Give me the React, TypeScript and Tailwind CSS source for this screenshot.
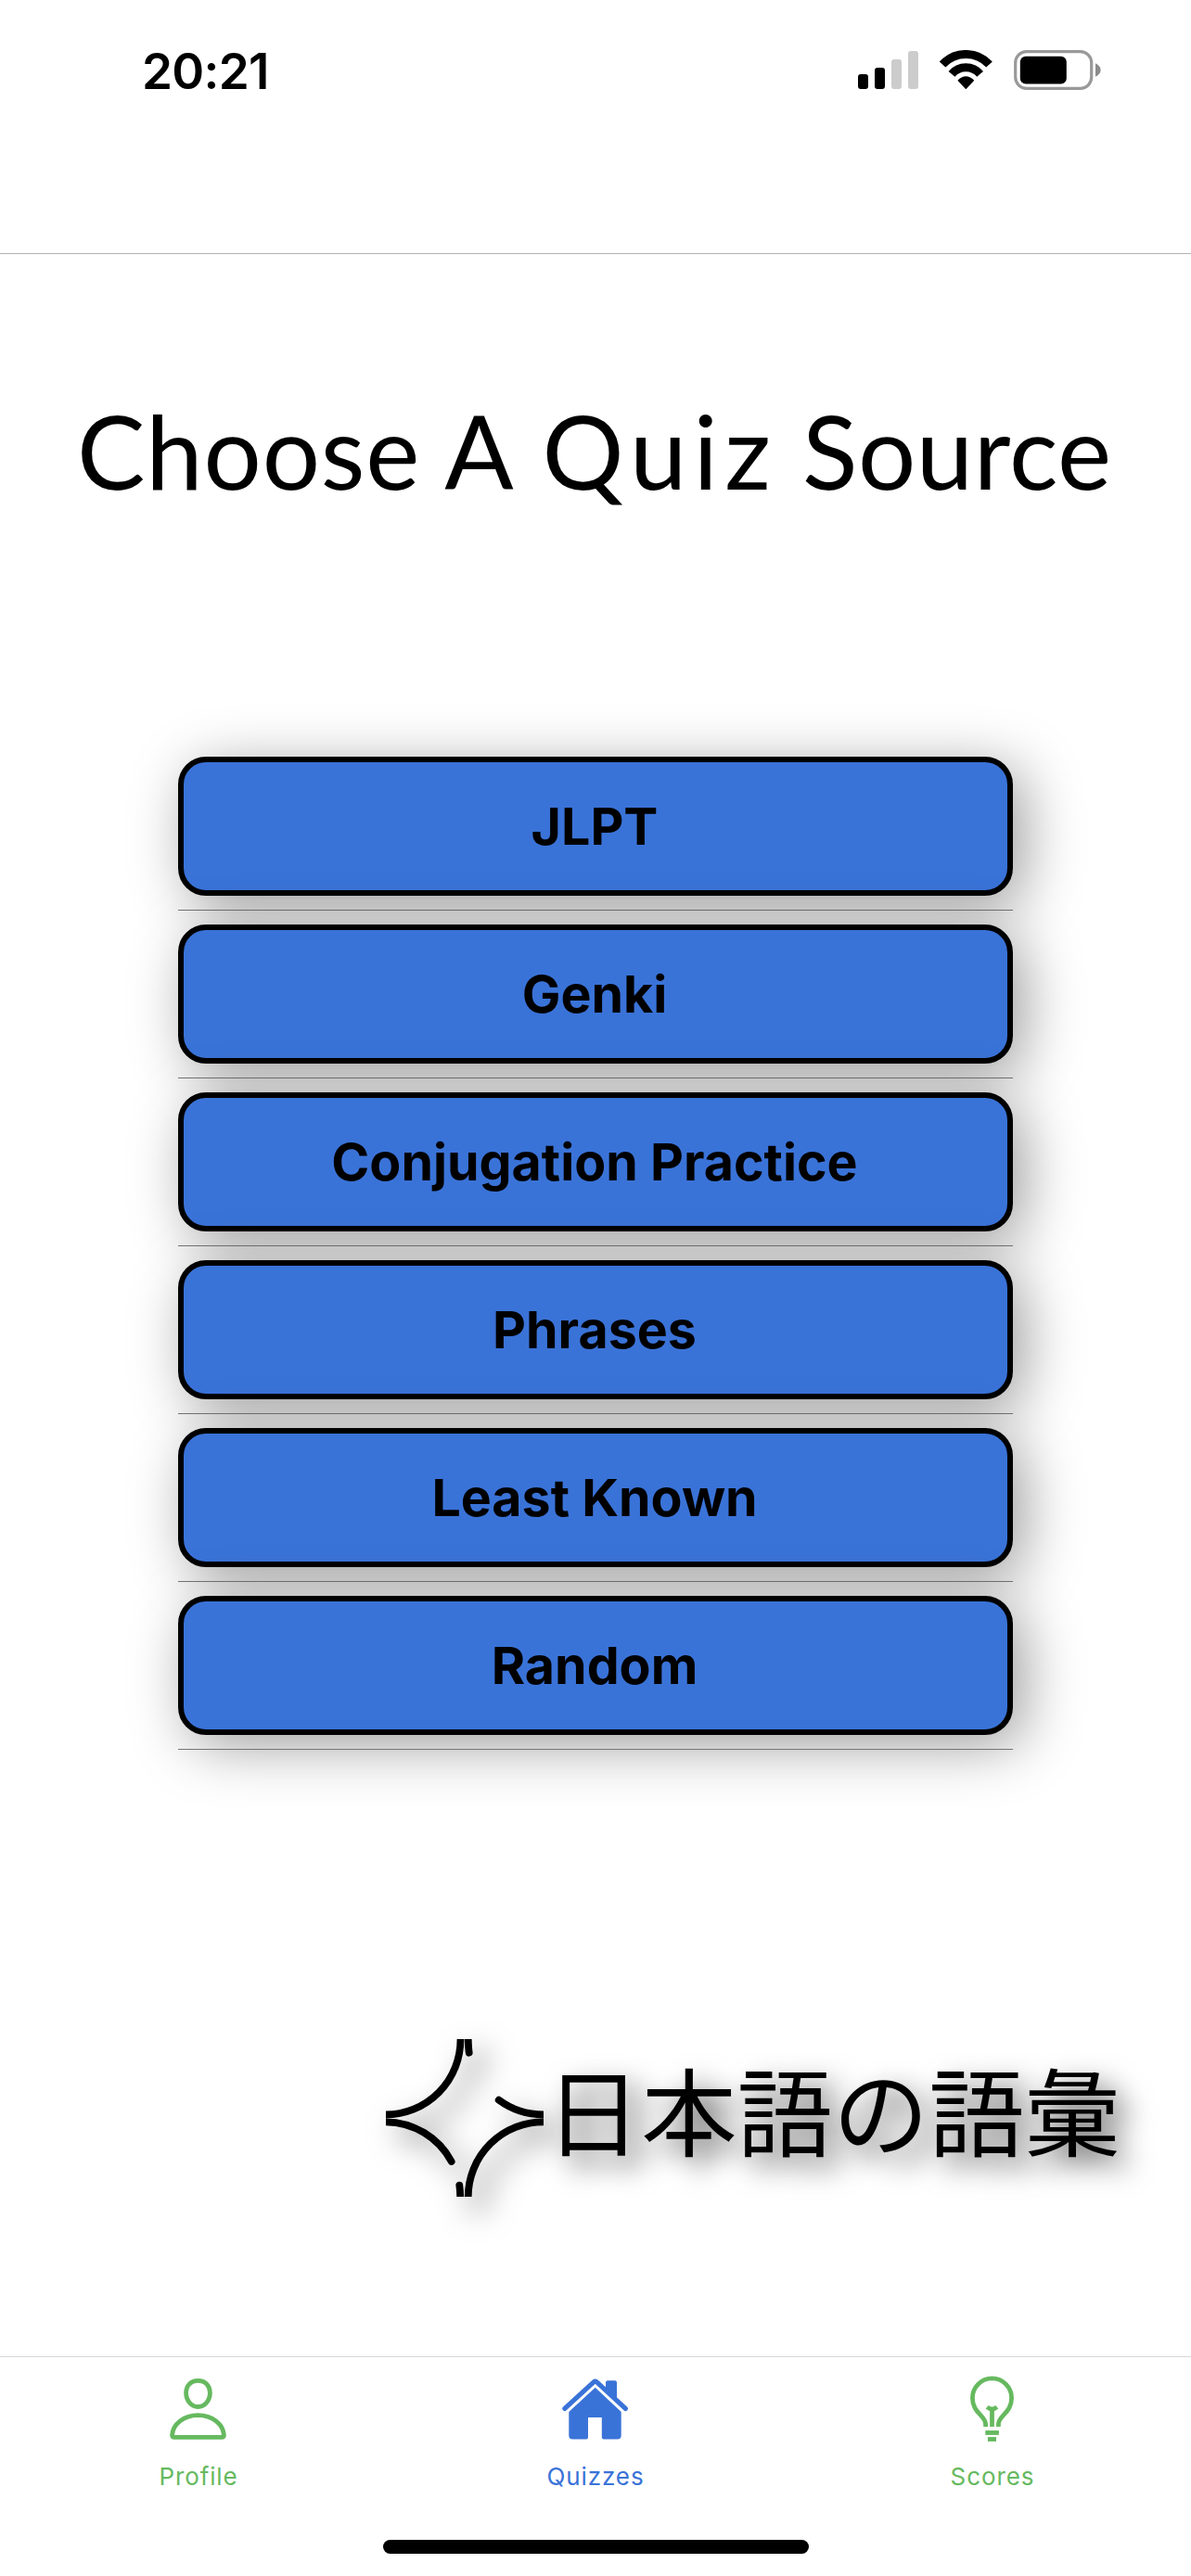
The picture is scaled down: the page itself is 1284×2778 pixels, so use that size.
import React from 'react';

const sources = ['JLPT', 'Genki', 'Conjugation Practice', 'Phrases', 'Least Known', 'Random'];

function SignalIcon() {
  return (
    <svg width="66" height="44" viewBox="0 0 66 44">
      <rect x="0" y="26" width="11" height="16" rx="3" fill="#000" />
      <rect x="18" y="19" width="11" height="23" rx="3" fill="#000" />
      <rect x="36" y="10" width="11" height="32" rx="3" fill="#ccc" />
      <rect x="54" y="1" width="11" height="41" rx="3" fill="#ccc" />
    </svg>
  );
}

function WifiIcon() {
  return (
    <svg width="60" height="44" viewBox="0 0 60 44" className="ml-[21px]">
      <g transform="translate(29.3 38.8)">
        <path d="M-25.2 -23.3A34.3 34.3 0 0 1 25.2 -23.3" fill="none" stroke="#000" strokeWidth="9" />
        <path d="M-15.3 -12.9A20 20 0 0 1 15.3 -12.9" fill="none" stroke="#000" strokeWidth="9" />
        <path d="M-8 -6Q0 -13.6 8 -6L0 2.4Z" fill="#000" stroke="#000" strokeWidth="1.4" strokeLinejoin="round" />
      </g>
    </svg>
  );
}

function BatteryIcon() {
  return (
    <svg width="96" height="44" viewBox="0 0 96 44" className="ml-[21px]">
      <rect x="1.7" y="1.7" width="82" height="39.6" rx="12" fill="none" stroke="#999" strokeWidth="3.2" />
      <rect x="6.8" y="6.8" width="50" height="29.6" rx="6" fill="#000" />
      <path d="M88 14.3Q93.6 17 93.6 21.5T88 28.7Z" fill="#8c8c8c" />
    </svg>
  );
}

function SparkMark() {
  return (
    <svg
      width="170"
      height="170"
      viewBox="0 0 170 170"
      className="shrink-0 drop-shadow-[14px_14px_16px_rgba(0,0,0,0.5)]"
      fill="none"
      stroke="#000"
      strokeWidth="7.8"
      strokeLinecap="round"
    >
      <path d="M80.5 -4V0A81 81 0 0 1 0 81.5H-5" />
      <path d="M-5 89.3H0A81 81 0 0 1 70.7 132" />
      <path d="M79.3 157.7Q80.3 164 80.3 176" />
      <path d="M88.7 176V170A81 81 0 0 1 170 89.3H176" />
      <path d="M121.7 65.7A81 81 0 0 0 170 81.5H176" />
      <path d="M89.7 14.7Q88.7 8 88.7 -5" />
    </svg>
  );
}

function ProfileIcon() {
  return (
    <svg width="84" height="84" viewBox="0 0 84 84" fill="none" stroke="currentColor" strokeWidth="4.8">
      <path d="M41.5 11.4C49.5 11.4 54.4 17 54.4 24.6C54.4 32.5 49 39.5 41.5 39.5S28.6 32.5 28.6 24.6C28.6 17 33.5 11.4 41.5 11.4Z" />
      <path
        d="M15.8 72.4H67.2Q69.4 72.4 69.4 70C68.6 58 56.8 48.6 41.5 48.6S14.4 58 13.6 70Q13.6 72.4 15.8 72.4Z"
        strokeLinejoin="round"
      />
    </svg>
  );
}

function HouseIcon() {
  return (
    <svg width="84" height="84" viewBox="0 0 84 84" fill="currentColor">
      <path
        d="M8.9 41.4L40 12.9Q41.7 11.5 43.4 12.9L74.3 41.4"
        fill="none"
        stroke="currentColor"
        strokeWidth="5.2"
        strokeLinecap="round"
      />
      <path d="M53 23V13.3Q53 11.3 55 11.3H63Q65 11.3 65 13.3V35Z" />
      <path d="M41.7 18.7L69.7 45V70.6Q69.7 74.6 65.7 74.6H50.8Q48.8 74.6 48.8 72.6V51H34V72.6Q34 74.6 32 74.6H17.3Q13.3 74.6 13.3 70.6V45Z" />
    </svg>
  );
}

function BulbIcon() {
  return (
    <svg width="84" height="84" viewBox="0 0 84 84" fill="none" stroke="currentColor" strokeWidth="4.8">
      <path d="M34.6 61V58.5C34.6 48.5 20.4 46.5 20.4 30A21.1 21.1 0 0 1 62.6 30C62.6 46.5 48.4 48.5 48.4 58.5V61" />
      <path d="M41.5 61V43.5" />
      <path d="M36.2 39.8Q41.5 44.4 46.8 39.8" />
      <path d="M34.3 67.5H48.9" />
      <path d="M36.9 74.5H46" />
    </svg>
  );
}

const tabs = [
  { label: 'Profile', color: 'text-[#66b95f]', Icon: ProfileIcon },
  { label: 'Quizzes', color: 'text-[#3a73d8]', Icon: HouseIcon },
  { label: 'Scores', color: 'text-[#66b95f]', Icon: BulbIcon },
];

export default function App() {
  return (
    <div className="flex h-[2778px] w-[1284px] flex-col overflow-hidden bg-white font-['Inter',sans-serif] text-black">
      <header className="h-[274px] shrink-0 border-b border-[#b2b2b2] pt-[54px]">
        <div className="flex h-11 items-center">
          <span className="ml-[153px] w-[772px] pt-[2px] text-[53px] leading-[44px] font-semibold tracking-[-0.7px]">
            20:21
          </span>
          <SignalIcon />
          <WifiIcon />
          <BatteryIcon />
        </div>
      </header>

      <main className="flex grow flex-col">
        <h1 className="mt-[151px] flex h-[121px] pl-[83px] font-['Lato',sans-serif] text-[110px] leading-[121px] whitespace-nowrap">
          <span className="tracking-[0.8px]">Choose</span>
          <span className="ml-[26px]">A</span>
          <span className="ml-[31px] tracking-[7.2px]">Quiz</span>
          <span className="ml-[27px] tracking-[0.5px]">Source</span>
        </h1>

        <ul className="mt-[270px] ml-[192px] w-[900px]">
          {sources.map((name) => (
            <li key={name}>
              <button className="block h-[150px] w-full rounded-[30px] border-[6px] border-black bg-[#3a73d8] pr-[2px] text-center text-[55.5px] leading-[138px] font-bold shadow-[12px_12px_62px_rgba(0,0,0,0.38)]">
                {name}
              </button>
              <hr className="my-[15px] border-t border-[#747476]" />
            </li>
          ))}
        </ul>

        <div className="mt-[297px] flex pl-[416px]">
          <SparkMark />
          <span className="ml-[2px] h-[148px] font-['Noto_Sans_CJK_JP',sans-serif] text-[103.3px] leading-[148px] whitespace-nowrap [text-shadow:13px_13px_30px_rgba(0,0,0,0.65)]">
            日本語の語彙
          </span>
        </div>
      </main>

      <nav className="flex h-[237px] shrink-0 flex-col border-t border-[#d8d8d8]">
        <div className="grid grid-cols-3 pt-[14px]">
          {tabs.map(({ label, color, Icon }) => (
            <div key={label} className={`flex flex-col items-center ${color}`}>
              <Icon />
              <span className="mt-[14px] text-[26px] leading-[33px] tracking-[0.9px]">{label}</span>
            </div>
          ))}
        </div>
        <div className="mx-auto mt-[52px] h-[15px] w-[459px] rounded-full bg-black" />
      </nav>
    </div>
  );
}
